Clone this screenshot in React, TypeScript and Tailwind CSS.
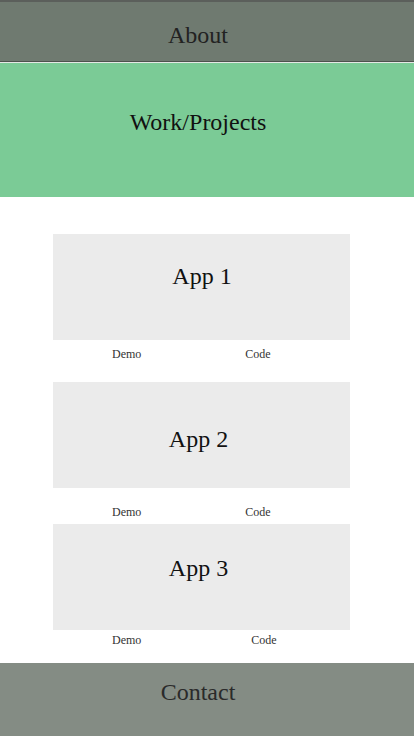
const projects = [
  { name: 'App 1', pad: 'pt-[28px] pl-[1px]', links: 'mt-[6px]', codeGap: 'ml-[104px]', next: 'mt-[20px]' },
  { name: 'App 2', pad: 'pt-[43px] pr-[6px]', links: 'mt-[16px]', codeGap: 'ml-[104px]', next: 'mt-[4px]' },
  { name: 'App 3', pad: 'pt-[30px] pr-[6px]', links: 'mt-[2px]', codeGap: 'ml-[110px]', next: 'mt-[15px]' },
]

export default function App() {
  return (
    <div className="min-h-[736px] w-[414px] bg-white font-['Liberation_Serif',serif]">
      <header className="h-[62px] border-t-2 border-b border-t-[#5b5f5b] border-b-[#4e524e] bg-[#6f7a70] pt-[19px] pr-[18px] text-center text-[24px] leading-[28px] text-[#222]">
        About
      </header>
      <section className="h-[135px] border-t border-t-[#e4e8e4] bg-[#7bcb96] pt-[45px] pr-[18px] text-center text-[24px] leading-[28px] text-[#111]">
        Work/Projects
      </section>

      <main className="pt-[37px]">
        {projects.map((p, i) => (
          <div key={p.name} className={i > 0 ? projects[i - 1].next : ''}>
            <div className={`ml-[53px] h-[106px] w-[297px] bg-[#ebebeb] text-center text-[24px] leading-[28px] text-[#111] ${p.pad}`}>
              {p.name}
            </div>
            <div className={`ml-[53px] flex w-[297px] pl-[59px] text-[12px] leading-[16px] text-[#333] ${p.links}`}>
              <span>Demo</span>
              <span className={p.codeGap}>Code</span>
            </div>
          </div>
        ))}
      </main>

      <footer className="mt-[15px] h-[73px] bg-[#848c84] pt-[15px] pr-[18px] text-center text-[24px] leading-[28px] text-[#2a2a2a]">
        Contact
      </footer>
    </div>
  )
}
